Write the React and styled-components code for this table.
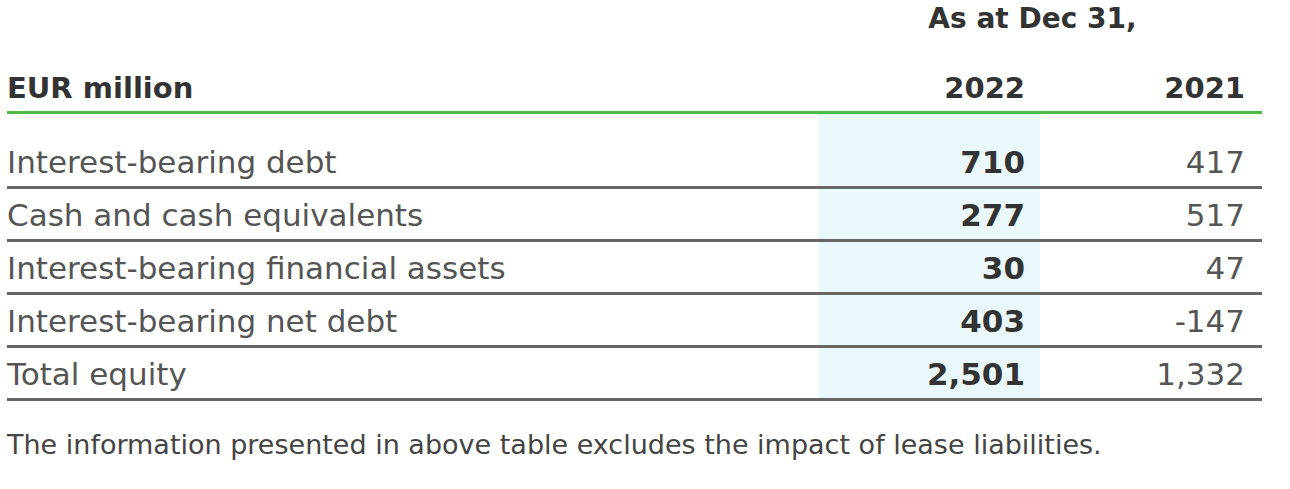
import React from 'react';
import styled, { createGlobalStyle } from 'styled-components';

const GlobalStyle = createGlobalStyle`
  body {
    margin: 0;
    background: #fff;
    font-family: "DejaVu Sans", "Open Sans", sans-serif;
  }
`;

const Page = styled.div`
  padding: 0 0 0 7px;
`;

const Table = styled.table`
  width: 1255px;
  border-collapse: collapse;
  table-layout: fixed;
`;

const LabelCol = styled.col`
  width: 811px;
`;

const NumCol = styled.col`
  width: 222px;
`;

const PeriodCell = styled.th`
  padding: 1px 15px 0 0;
  font-size: 28px;
  line-height: 36px;
  font-weight: 700;
  color: #333;
  text-align: center;
`;

const HeadCell = styled.th`
  padding: 31px ${(p) => (p.$last ? '17px' : '15px')} 3px 0;
  font-size: 29px;
  line-height: 40px;
  font-weight: 700;
  color: #333;
  text-align: ${(p) => (p.$num ? 'right' : 'left')};
  border-bottom: 3px solid #4dba45;
`;

const Row = styled.tr`
  border-bottom: 3px solid #666;
`;

const Label = styled.td`
  padding: ${(p) => (p.$first ? '24.5px' : '3px')} 0 0 0;
  font-size: 31px;
  line-height: 47px;
  color: #555;
  white-space: nowrap;
`;

const Value = styled.td`
  padding: ${(p) => (p.$first ? '24.5px' : '3px')} ${(p) => (p.$current ? '15px' : '17px')} 0 0;
  font-size: 31px;
  line-height: 47px;
  text-align: right;
  font-weight: ${(p) => (p.$current ? 700 : 400)};
  color: ${(p) => (p.$current ? '#333' : '#555')};
  background: ${(p) => (p.$current ? '#eaf8fc' : 'transparent')};
`;

const Note = styled.p`
  margin: 29px 0 0;
  font-size: 27px;
  line-height: 30px;
  color: #444;
`;

const rows = [
  ['Interest-bearing debt', '710', '417'],
  ['Cash and cash equivalents', '277', '517'],
  ['Interest-bearing financial assets', '30', '47'],
  ['Interest-bearing net debt', '403', '-147'],
  ['Total equity', '2,501', '1,332'],
];

export default function App() {
  return (
    <Page>
      <GlobalStyle />
      <Table>
        <colgroup>
          <LabelCol />
          <NumCol />
          <NumCol />
        </colgroup>
        <thead>
          <tr>
            <th />
            <PeriodCell colSpan={2}>As at Dec 31,</PeriodCell>
          </tr>
          <tr>
            <HeadCell>EUR million</HeadCell>
            <HeadCell $num>2022</HeadCell>
            <HeadCell $num $last>2021</HeadCell>
          </tr>
        </thead>
        <tbody>
          {rows.map(([label, cur, prev], i) => (
            <Row key={label}>
              <Label $first={i === 0}>{label}</Label>
              <Value $first={i === 0} $current>{cur}</Value>
              <Value $first={i === 0}>{prev}</Value>
            </Row>
          ))}
        </tbody>
      </Table>
      <Note>The information presented in above table excludes the impact of lease liabilities.</Note>
    </Page>
  );
}
